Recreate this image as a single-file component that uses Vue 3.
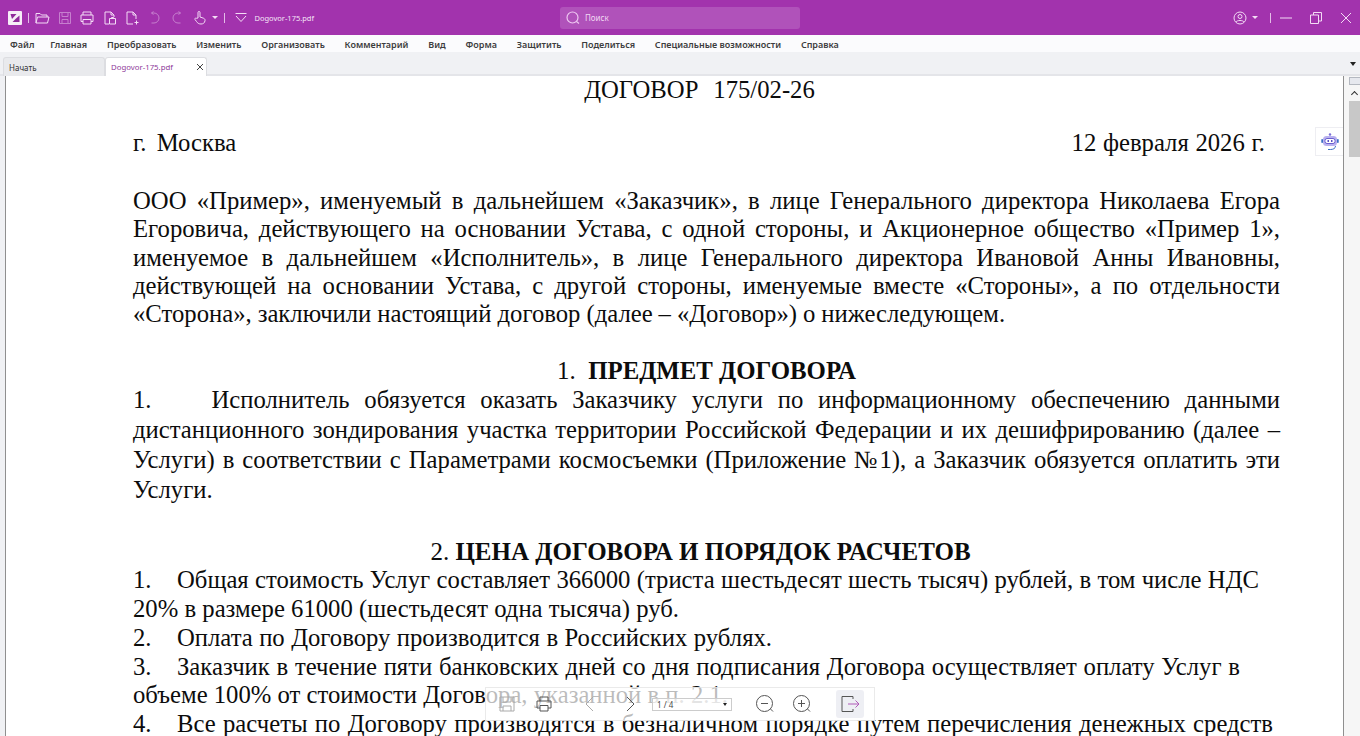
<template>
  <div class="app">
    <header class="titlebar">
      <div class="quick">
        <svg class="logo" width="14" height="14" viewBox="0 0 14 14">
          <rect width="14" height="14" rx="1" fill="#f6eef7" />
          <path d="M2.500 3h6L4 8zM11.500 4.500V11h-7L8 7.500z" fill="#8f2a9a" />
        </svg>
        <i class="sep first-sep"></i>
        <svg class="ico" width="16" height="16" viewBox="0 0 16 16">
          <path d="M2 13V3.500h4L7.500 5H13v2M2 13l1.500-6H15l-1.500 6z" />
        </svg>
        <svg class="ico dim" width="16" height="16" viewBox="0 0 16 16">
          <path d="M2.500 2.500h11v11h-11zM5 2.500v4h6v-4M5 13.500v-4h6v4" />
        </svg>
        <svg class="ico" width="16" height="16" viewBox="0 0 16 16">
          <path d="M4 5V2h8v3M4 11.500H2V5h12v6.500h-2M4 9.500h8V14H4z" />
        </svg>
        <svg class="ico" width="16" height="16" viewBox="0 0 16 16">
          <path d="M7 14H3V2h6l3 3v2M9 2v3h3M7.500 8.500h6V14h-6zM9.500 8.500v-1h2v1" />
        </svg>
        <svg class="ico" width="16" height="16" viewBox="0 0 16 16">
          <path d="M9 14H3V2h6l3 3v4M9 2v3h3M12.500 10.500v4M10.500 12.500h4" />
        </svg>
        <svg class="ico dim" width="16" height="16" viewBox="0 0 16 16">
          <path d="M4.500 3H7a5 5 0 0 1 0 10H4.500M4.500 3l2-1.500M4.500 3l2 1.500" />
        </svg>
        <svg class="ico dim" width="16" height="16" viewBox="0 0 16 16">
          <path d="M11.500 3H9a5 5 0 0 0 0 10h2.500M11.500 3l-2-1.500M11.500 3l-2 1.500" />
        </svg>
        <svg class="ico hand" width="16" height="16" viewBox="0 0 16 16">
          <path d="M6 8V2.500a1 1 0 0 1 2 0V7l3.500 1.200c1.200.5 1.700 1.300 1.500 2.500-.4 2.300-1.800 3.300-4 3.300-2.300 0-3.500-1-4.500-2.500L3 9.500c-.6-1 .8-2 1.600-1.200z" />
        </svg>
        <i class="caret"></i>
        <i class="sep"></i>
        <svg class="ico down" width="16" height="16" viewBox="0 0 16 16">
          <path d="M2.500 3.500h11M3 6l5 5.500L13 6" />
        </svg>
        <span class="filename">Dogovor-175.pdf</span>
      </div>
      <div class="search">
        <svg width="16" height="16" viewBox="0 0 16 16" fill="none" stroke="#efc8f2" stroke-width="1.200">
          <circle cx="7.500" cy="7.500" r="5.500" />
          <path d="M11.500 11.500l2.500 2" />
        </svg>
        <span>Поиск</span>
      </div>
      <div class="window">
        <svg class="ico" width="14" height="14" viewBox="0 0 14 14">
          <circle cx="7" cy="7" r="6" />
          <circle cx="7" cy="5.500" r="2" />
          <path d="M3 11c1-2 7-2 8 0" />
        </svg>
        <i class="caret"></i>
        <i class="sep"></i>
        <svg class="ico" width="14" height="14" viewBox="0 0 14 14"><path d="M1 7h12" /></svg>
        <svg class="ico" width="14" height="14" viewBox="0 0 14 14">
          <path d="M1.500 4h8v8.500h-8zM4.500 4V1.500h8V10H9.500" />
        </svg>
        <svg class="ico" width="14" height="14" viewBox="0 0 14 14"><path d="M2 2l10 10M12 2L2 12" /></svg>
      </div>
    </header>

    <nav class="menu">
      <a v-for="item in menu" :key="item">{{ item }}</a>
    </nav>

    <div class="tabs">
      <div class="tab start">Начать</div>
      <div class="tab active">
        <span>Dogovor-175.pdf</span>
        <svg width="8" height="8" viewBox="0 0 8 8" fill="none" stroke="#444" stroke-width="1"><path d="M1 1l6 6M7 1L1 7" /></svg>
      </div>
      <i class="tabs-caret"></i>
    </div>

    <main class="workspace">
      <article class="doc">
        <div class="title">ДОГОВОР&nbsp;&nbsp; 175/02-26</div>
        <div class="place"><span class="city">г. Москва</span><span class="date">12 февраля 2026 г.</span></div>

        <div class="para intro">
          <div v-for="line in intro" :key="line" class="just">{{ line }}</div>
          <div class="last">«Сторона», заключили настоящий договор (далее – «Договор») о нижеследующем.</div>
        </div>

        <h2 class="head first">1.&nbsp; <b>ПРЕДМЕТ ДОГОВОРА</b></h2>
        <div class="para subject">
          <div class="just">1.<span class="tab-gap"></span>Исполнитель обязуется оказать Заказчику услуги по информационному обеспечению данными</div>
          <div class="just">дистанционного зондирования участка территории Российской Федерации и их дешифрированию (далее –</div>
          <div class="just">Услуги) в соответствии с Параметрами космосъемки (Приложение №1), а Заказчик обязуется оплатить эти</div>
          <div>Услуги.</div>
        </div>

        <h2 class="head second">2. <b>ЦЕНА ДОГОВОРА И ПОРЯДОК РАСЧЕТОВ</b></h2>
        <div class="para price">
          <div
            v-for="line in price"
            :key="line.text"
            :class="{ just: line.width }"
            :style="line.width ? { width: line.width + 'px' } : null"
          >
            <span v-if="line.num" class="n">{{ line.num }}.</span>{{ line.text }}
          </div>
        </div>
      </article>

      <aside class="scrollbar">
        <div class="scroll-cap"></div>
        <div class="scroll-up"></div>
        <div class="scroll-thumb"></div>
      </aside>

      <button class="bot">
        <svg width="18" height="18" viewBox="0 0 18 18">
          <circle cx="9" cy="1.500" r="1.200" fill="#7a6fd8" />
          <rect x="2" y="3" width="14" height="10" rx="3.500" fill="#b9b1ef" />
          <rect x="4" y="5.500" width="10" height="5" rx="2" fill="#fff" stroke="#6a5fd0" />
          <rect x="6.500" y="7" width="1.500" height="2" fill="#5b50c2" />
          <rect x="10" y="7" width="1.500" height="2" fill="#5b50c2" />
          <rect x="0.300" y="6" width="1.700" height="4" rx=".8" fill="#3a6fc4" />
          <rect x="16" y="6" width="1.700" height="4" rx=".8" fill="#3a6fc4" />
          <path d="M14.500 13c0 2.500-2.500 3.500-5 3.500H7" fill="none" stroke="#3a6fc4" stroke-width="1" />
        </svg>
      </button>

      <div class="float-bar">
        <svg class="fi light save" width="18" height="18" viewBox="0 0 18 18"><path d="M2 2h14v14H2zM5 2v5h8V2M5 16v-5h8v5" /></svg>
        <svg class="fi print" width="18" height="18" viewBox="0 0 18 18"><path d="M5 6V2h8v4M5 13H2V6h14v7h-3M5 10.500h8V16H5z" /></svg>
        <svg class="fi light prev" width="18" height="18" viewBox="0 0 18 18"><path d="M12 2L5 9l7 7" /></svg>
        <svg class="fi next" width="18" height="18" viewBox="0 0 18 18"><path d="M6 2l7 7-7 7" /></svg>
        <div class="page-box"><span>1 / 4</span><i></i></div>
        <svg class="fi zoom-out" width="20" height="20" viewBox="0 0 20 20"><circle cx="9.500" cy="9.500" r="8" /><path d="M6 9.500h7M15.500 15l2.500 2.500" /></svg>
        <svg class="fi zoom-in" width="20" height="20" viewBox="0 0 20 20"><circle cx="9.500" cy="9.500" r="8" /><path d="M6 9.500h7M9.500 6v7M15.500 15l2.500 2.500" /></svg>
        <div class="exit">
          <svg class="fi" width="20" height="18" viewBox="0 0 20 18"><path d="M13 4V1.500H2v15h11V14" /><path class="arrow" d="M8 9h11M15.500 5.500L19 9l-3.500 3.500" /></svg>
        </div>
      </div>
    </main>
  </div>
</template>

<script setup>
const menu = ['Файл', 'Главная', 'Преобразовать', 'Изменить', 'Организовать', 'Комментарий', 'Вид', 'Форма', 'Защитить', 'Поделиться', 'Специальные возможности', 'Справка']

const intro = [
  'ООО «Пример», именуемый в дальнейшем «Заказчик», в лице Генерального директора Николаева Егора',
  'Егоровича, действующего на основании Устава, с одной стороны, и Акционерное общество «Пример 1»,',
  'именуемое в дальнейшем «Исполнитель», в лице Генерального директора Ивановой Анны Ивановны,',
  'действующей на основании Устава, с другой стороны, именуемые вместе «Стороны», а по отдельности'
]

// ширина строки подогнана под оригинал, там строки разъезжаются неравномерно
const price = [
  { num: 1, width: 1126, text: 'Общая стоимость Услуг составляет 366000 (триста шестьдесят шесть тысяч) рублей, в том числе НДС' },
  { width: 546, text: '20% в размере 61000 (шестьдесят одна тысяча) руб.' },
  { num: 2, width: 639, text: 'Оплата по Договору производится в Российских рублях.' },
  { num: 3, width: 1107, text: 'Заказчик в течение пяти банковских дней со дня подписания Договора осуществляет оплату Услуг в' },
  { text: 'объеме 100% от стоимости Договора, указанной в п. 2.1.' },
  { num: 4, width: 1140, text: 'Все расчеты по Договору производятся в безналичном порядке путем перечисления денежных средств' }
]
</script>

<style>
html, body {
  margin: 0;
  overflow: hidden;
}
</style>

<style scoped>
.app {
  width: 1360px;
  height: 736px;
  display: flex;
  flex-direction: column;
  overflow: hidden;
  font-family: "Noto Sans", "Open Sans", sans-serif;
  background: #fff;
}

.titlebar {
  height: 35px;
  flex: none;
  background: #a233ad;
  display: flex;
  align-items: center;
  padding: 0 7px 0 8px;
  box-sizing: border-box;
}

.quick {
  display: flex;
  align-items: center;
  gap: 6.500px;
  width: 552px;
}

.ico {
  fill: none;
  stroke: #f3dcf5;
  stroke-width: 1;
  flex: none;
}

.ico.dim {
  stroke: #c67fce;
}

.logo {
  flex: none;
}

.sep {
  width: 1px;
  height: 10px;
  background: #e3bde7;
  flex: none;
}

.first-sep {
  margin: 0 -1px 0 -1px;
}

.caret {
  width: 0;
  height: 0;
  border-left: 3px solid transparent;
  border-right: 3px solid transparent;
  border-top: 3px solid #f3dcf5;
  margin-left: -3px;
  flex: none;
}

.ico.hand {
  margin-left: .5px;
}

.ico.down {
  margin-left: 1.500px;
}

.filename {
  color: #f5e5f7;
  font-size: 7.500px;
  margin-left: -1px;
}

.search {
  width: 240px;
  height: 22px;
  border-radius: 3px;
  background: #b052ba;
  display: flex;
  align-items: center;
  gap: 4px;
  padding-left: 5px;
  box-sizing: border-box;
  color: #f0d9f3;
  font-size: 8px;
}

.window {
  margin-left: auto;
  display: flex;
  align-items: center;
  gap: 16px;
}

.window .caret {
  margin-left: -11px;
}

.window .sep {
  margin: 0 -8px 0 -4px;
}

.menu {
  height: 17px;
  flex: none;
  box-sizing: border-box;
  padding: 2px 0 0 10px;
  background: #fbfbfd;
  display: flex;
  align-items: center;
  gap: 19.800px;
  font-size: 9px;
  font-weight: 600;
  color: #3d3d3d;
  white-space: nowrap;
}

.menu a:first-child {
  margin-right: -4px;
}

.tabs {
  height: 24px;
  flex: none;
  background: #f0f1f4;
  border-bottom: 2px solid #e4e5e9;
  box-sizing: border-box;
  display: flex;
  align-items: flex-end;
  padding-left: 3px;
  position: relative;
  font-size: 8px;
}

.tab {
  height: 19px;
  margin-bottom: -2px;
  box-sizing: border-box;
  border-radius: 3px 3px 0 0;
  display: flex;
  align-items: center;
}

.tab.start {
  width: 102px;
  padding-left: 5px;
  background: #e9eaed;
  border: 1px solid #dcdde1;
  border-bottom: none;
  color: #333;
}

.tab.active {
  width: 102px;
  padding: 0 2px 0 5px;
  background: #fff;
  border: 1px solid #dcdde1;
  border-bottom: none;
  color: #8e3a99;
  font-size: 7.800px;
  justify-content: space-between;
}

.tabs-caret {
  position: absolute;
  right: 4px;
  top: 10px;
  border-left: 3.500px solid transparent;
  border-right: 3.500px solid transparent;
  border-top: 4px solid #222;
}

.workspace {
  flex: 1;
  min-height: 0;
  position: relative;
  display: flex;
  overflow: hidden;
  background: #f0f1f4;
  padding-left: 5px;
}

.doc {
  width: 1339px;
  flex: none;
  background: #fff;
  border-left: 1px solid #8f8f8f;
  border-right: 1px solid #8f8f8f;
  box-sizing: border-box;
  padding: 0 63px 0 127px;
  font-family: "Liberation Serif", "Noto Serif", serif;
  font-size: 24.700px;
  color: #0c0c0c;
  white-space: nowrap;
}

.title {
  text-align: center;
  line-height: 28px;
  padding-right: 14px;
  word-spacing: -1.200px;
}

.place {
  display: flex;
  justify-content: space-between;
  line-height: 28px;
  margin-top: 25px;
  padding-right: 15px;
}

.city {
  word-spacing: 4px;
}

.date {
  word-spacing: .5px;
}

.para.intro {
  margin-top: 30px;
  line-height: 28.300px;
}

.last {
  word-spacing: -.2px;
}

.just {
  text-align: justify;
  text-align-last: justify;
  white-space: normal;
}

.head {
  margin: 0;
  font-weight: 400;
  text-align: center;
  line-height: 29px;
}

.head b {
  font-weight: 700;
}

.head.first {
  margin-top: 28px;
  font-size: 24.850px;
}

.head.second {
  margin-top: 33px;
  padding-right: 12px;
  font-size: 25px;
}

.para.subject {
  line-height: 29.700px;
}

.tab-gap {
  display: inline-block;
  width: 60px;
}

.para.price {
  line-height: 28.800px;
}

.n {
  display: inline-block;
  width: 44px;
}

.scrollbar {
  width: 16px;
  flex: none;
  box-sizing: border-box;
  padding-left: 5px;
  background: #f6f6f6;
  display: flex;
  flex-direction: column;
}

.scroll-cap {
  height: 6px;
  margin-top: 1px;
  background: #e6e8ee;
  border: 1px solid #b4b8c0;
  border-right: none;
}

.scroll-up {
  height: 16px;
  position: relative;
}

.scroll-up::after {
  content: "";
  position: absolute;
  left: 3px;
  top: 7px;
  width: 4px;
  height: 4px;
  border-left: 1px solid #333;
  border-top: 1px solid #333;
  transform: rotate(45deg);
}

.scroll-thumb {
  height: 56px;
  background: #c8c8c8;
}

.bot {
  position: absolute;
  left: 1315px;
  top: 51px;
  width: 28px;
  height: 29px;
  padding: 0;
  background: #fff;
  border: 1px solid #eeeef2;
  border-right: none;
  display: flex;
  align-items: center;
  justify-content: center;
}

.float-bar {
  position: absolute;
  left: 485px;
  top: 611px;
  width: 390px;
  height: 34px;
  box-sizing: border-box;
  border: 1px solid rgba(225, 225, 225, .7);
  background: rgba(255, 255, 255, .72);
  display: flex;
  align-items: center;
  padding-left: 12px;
}

.fi {
  flex: none;
  fill: none;
  stroke: #555;
  stroke-width: 1;
}

.fi.light {
  stroke: #aaa;
}

.fi .arrow {
  stroke: #b05bb8;
}

.print {
  margin-left: 19px;
}

.prev {
  margin-left: 28px;
}

.next {
  margin-left: 22px;
}

.zoom-out {
  margin-left: 23px;
}

.zoom-in {
  margin-left: 17px;
}

.page-box {
  width: 80px;
  height: 13px;
  margin-left: 13px;
  box-sizing: border-box;
  border: 1px solid #ccc;
  background: rgba(255, 255, 255, .6);
  font-size: 8px;
  color: #444;
  display: flex;
  align-items: center;
  justify-content: space-between;
  padding: 0 4px;
}

.page-box i {
  border-left: 2.500px solid transparent;
  border-right: 2.500px solid transparent;
  border-top: 3px solid #222;
}

.exit {
  width: 28px;
  height: 28px;
  margin-left: 24px;
  border-radius: 3px;
  background: rgba(235, 236, 242, .85);
  display: flex;
  align-items: center;
  justify-content: center;
}
</style>
